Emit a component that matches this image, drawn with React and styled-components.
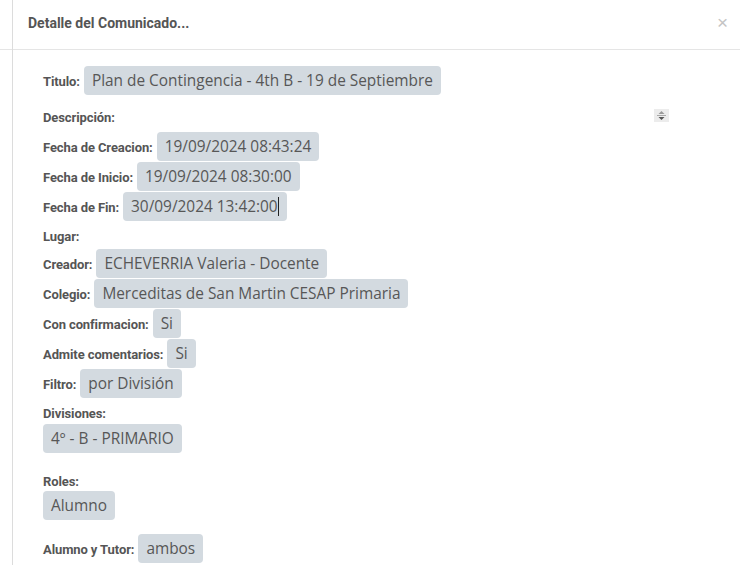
import React from "react"
import styled, { createGlobalStyle } from "styled-components"

const Global = createGlobalStyle`
  html, body {
    margin: 0;
    padding: 0;
    background: #fff;
  }
  body {
    font-family: Roboto, "Liberation Sans", sans-serif;
    color: #555;
  }
`

const Modal = styled.div`
  width: 740px;
  height: 565px;
  overflow: hidden;
  display: flex;
  flex-direction: column;
`

const Header = styled.div`
  height: 49px;
  border-bottom: 1px solid #e5e5e5;
  display: flex;
  align-items: center;
  justify-content: space-between;
  padding: 0 12px 0 28px;
  box-sizing: content-box;
`

const Title = styled.h4`
  margin: 0;
  font-size: 14px;
  font-weight: 700;
  color: #555;
  margin-top: -4px;
`

const Close = styled.span`
  font-family: "Liberation Sans", Arial, sans-serif;
  font-size: 19px;
  color: #c4c4c4;
  margin-top: -4px;
`

const Shell = styled.div`
  flex: 1;
  display: flex;
`

const Gutter = styled.div`
  width: 12px;
  border-right: 1px solid #dcdcdc;
  margin-top: -50px;
`

const Body = styled.div`
  flex: 1;
  padding: 15px 0 0 30px;
  display: flex;
  flex-direction: column;
`

const Row = styled.div`
  display: flex;
  align-items: baseline;
  height: ${(p) => p.$h || 30}px;
  padding-top: ${(p) => (p.$pt === undefined ? 1 : p.$pt)}px;
  box-sizing: border-box;
  position: relative;
`

const Label = styled.span`
  font-size: 13px;
  font-weight: 700;
  color: #555;
  margin-right: 4px;
  letter-spacing: -0.1px;
`

const Value = styled.span`
  display: inline-flex;
  align-items: center;
  height: 29px;
  padding: 0 8px;
  background: #d3dae0;
  border-radius: 4px;
  font-family: "Open Sans", sans-serif;
  font-size: 15.4px;
  color: #575757;
  white-space: nowrap;
`

const Caret = styled.span`
  display: inline-block;
  width: 1px;
  height: 19px;
  background: #222;
`

const Spinner = styled.span`
  position: absolute;
  left: 611px;
  top: 14px;
  width: 15px;
  height: 13px;
  background: #ececec;
  display: flex;
  align-items: center;
  justify-content: center;
`

const Divider = styled.div`
  height: ${(p) => p.$h}px;
`

const Field = ({ label, children, h }) => (
  <Row $h={h}>
    <Label>{label}</Label>
    {children && <Value>{children}</Value>}
  </Row>
)

export default function App() {
  return (
    <Modal>
      <Global />
      <Header>
        <Title>Detalle del Comunicado...</Title>
        <Close>×</Close>
      </Header>
      <Shell>
        <Gutter />
        <Body>
          <Field label="Titulo:">Plan de Contingencia - 4th B - 19 de Septiembre</Field>
          <Row $h={36} $pt={15}>
            <Label>Descripción:</Label>
            <Spinner>
              <svg width="11" height="11" viewBox="0 0 11 11">
                <path d="M5.5 1 L8.5 4 L2.5 4 Z" fill="#9a9a9a" />
                <rect x="1" y="5" width="9" height="1" fill="#a8a8a8" />
                <path d="M2.5 7 L8.5 7 L5.5 10 Z" fill="#555" />
              </svg>
            </Spinner>
          </Row>
          <Field label="Fecha de Creacion:">19/09/2024 08:43:24</Field>
          <Field label="Fecha de Inicio:">19/09/2024 08:30:00</Field>
          <Field label="Fecha de Fin:">
            30/09/2024 13:42:00
            <Caret />
          </Field>
          <Row $h={27} $pt={8}>
            <Label>Lugar:</Label>
          </Row>
          <Field label="Creador:">ECHEVERRIA Valeria - Docente</Field>
          <Field label="Colegio:">Merceditas de San Martin CESAP Primaria</Field>
          <Field label="Con confirmacion:">Si</Field>
          <Field label="Admite comentarios:">Si</Field>
          <Field label="Filtro:">por División</Field>
          <Row $h={25} $pt={8}>
            <Label>Divisiones:</Label>
          </Row>
          <Row>
            <Value>4º - B - PRIMARIO</Value>
          </Row>
          <Divider $h={17} />
          <Row $h={20} $pt={4}>
            <Label>Roles:</Label>
          </Row>
          <Row>
            <Value>Alumno</Value>
          </Row>
          <Divider $h={13} />
          <Field label="Alumno y Tutor:">ambos</Field>
        </Body>
      </Shell>
    </Modal>
  )
}
